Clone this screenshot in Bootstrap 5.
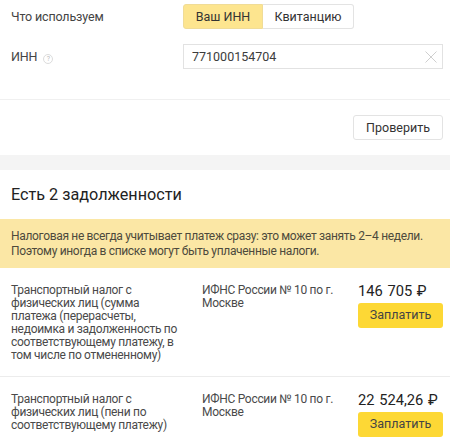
<!DOCTYPE html>
<html lang="ru">
<head>
<meta charset="utf-8">
<title>Задолженности</title>
<link href="https://cdn.jsdelivr.net/npm/bootstrap@5.3.0/dist/css/bootstrap.min.css" rel="stylesheet">
<style>
html,body{height:443px;overflow:hidden;background:#fff}
body{font-family:Roboto,"Liberation Sans",sans-serif;color:#3a3a3a;font-size:13px;width:450px}
.form-zone{padding:5px 7px 0 11px;height:99px}
.form-line{height:23px;display:flex;align-items:center}
.form-line + .form-line{margin-top:17px}
.form-label-cell{width:172px;flex:none;font-size:12.5px;letter-spacing:-.15px;color:#444;padding-top:2px}
.hint-dot{display:inline-block;width:10px;height:10px;border:1px solid #dcdcdc;border-radius:50%;font-size:7px;line-height:8px;text-align:center;color:#bbb;margin-left:6px;vertical-align:0}
.toggle-pair{display:flex;height:25px}
.toggle-on,.toggle-off{font-size:12.5px;color:#333;padding:1px 0 0;border:1px solid #e3e3e3;display:flex;align-items:center;justify-content:center;background:#fff;border-radius:0}
.toggle-on{width:80px;background:#fde58f;border-color:#f0dc97;border-radius:3px 0 0 3px}
.toggle-off{width:91px;border-left:0;border-radius:0 3px 3px 0}
.inn-wrap{width:260px;height:25px;border:1px solid #e2e2e2;display:flex;align-items:center;justify-content:space-between;padding:0 4px 0 8px}
.inn-value{border:0;outline:0;padding:1px 0 0;width:200px;font-size:12.5px;color:#3c3c3c;background:transparent;font-family:inherit}
.rule-line{height:1px;background:#f0f0f0}
.check-zone{height:55px;padding:15px 7px 0 0;display:flex;justify-content:flex-end;align-items:flex-start}
.check-btn{width:90px;height:25px;border:1px solid #e3e3e3;border-radius:3px;background:#fff;font-size:12.5px;color:#333;padding:1px 0 0}
.band-gap{height:15px;background:#f4f4f4}
.debts-title{font-size:16.2px;color:#222;padding:0 11px;margin:0;height:49px;line-height:49px;font-weight:400}
.notice-box{background:#fbe7a5;height:49px;padding:10px 11px 0;font-size:12px;letter-spacing:-.33px;line-height:15px;color:#4d4a3c;white-space:nowrap}
.debt-line{display:flex;padding:16px 7px 0 11px}
.debt-one{height:109px;border-bottom:1px solid #ececec}
.debt-name{width:191px;flex:none;padding-right:18px;font-size:12px;letter-spacing:-.3px;line-height:13px;color:#4a4a4a}
.debt-org{width:156px;flex:none;font-size:12px;letter-spacing:-.3px;line-height:13px;color:#4a4a4a}
.debt-pay{width:85px;flex:none}
.debt-sum{font-size:14.7px;line-height:16px;color:#222;white-space:nowrap;margin:-1px 0 4px;word-spacing:1px}
.pay-btn{width:85px;height:25px;background:#fdd835;border:0;border-radius:3px;font-size:12.5px;color:#444;padding:0}
</style>
</head>
<body>
<div class="form-zone">
  <div class="form-line">
    <div class="form-label-cell">Что используем</div>
    <div class="toggle-pair">
      <button class="toggle-on" type="button">Ваш ИНН</button>
      <button class="toggle-off" type="button">Квитанцию</button>
    </div>
  </div>
  <div class="form-line">
    <div class="form-label-cell">ИНН<span class="hint-dot">?</span></div>
    <div class="inn-wrap">
      <input class="inn-value" value="771000154704" aria-label="ИНН">
      <svg width="14" height="14" viewBox="0 0 14 14" aria-hidden="true"><path d="M1.500 1.500l11 11M12.500 1.500l-11 11" stroke="#cfcfcf" stroke-width="1" fill="none"/></svg>
    </div>
  </div>
</div>
<div class="rule-line"></div>
<div class="check-zone"><button class="check-btn" type="button">Проверить</button></div>
<div class="band-gap"></div>
<h2 class="debts-title">Есть 2 задолженности</h2>
<div class="notice-box">Налоговая не всегда учитывает платеж сразу: это может занять 2–4 недели.<br>Поэтому иногда в списке могут быть уплаченные налоги.</div>
<div class="debt-line debt-one">
  <div class="debt-name">Транспортный налог с физических лиц (сумма платежа (перерасчеты, недоимка и задолженность по соответствующему платежу, в том числе по отмененному)</div>
  <div class="debt-org">ИФНС России № 10 по г. Москве</div>
  <div class="debt-pay">
    <div class="debt-sum">146 705 ₽</div>
    <button class="pay-btn" type="button">Заплатить</button>
  </div>
</div>
<div class="debt-line">
  <div class="debt-name">Транспортный налог с физических лиц (пени по соответствующему платежу)</div>
  <div class="debt-org">ИФНС России № 10 по г. Москве</div>
  <div class="debt-pay">
    <div class="debt-sum">22 524,26 ₽</div>
    <button class="pay-btn" type="button">Заплатить</button>
  </div>
</div>
<script src="https://cdn.jsdelivr.net/npm/bootstrap@5.3.0/dist/js/bootstrap.bundle.min.js"></script>
</body>
</html>
